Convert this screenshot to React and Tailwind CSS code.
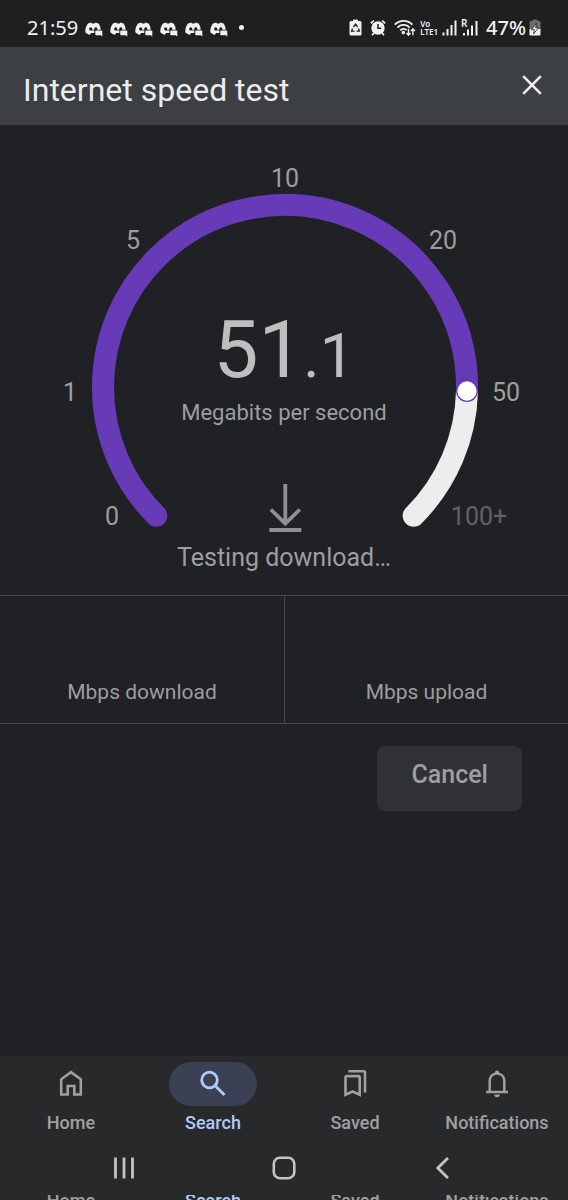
const TICKS = [
  { label: '0', x: 112, y: 400, tone: '#9d9e9f' },
  { label: '1', x: 70, y: 276, tone: '#9d9e9f' },
  { label: '5', x: 133, y: 124, tone: '#9d9e9f' },
  { label: '10', x: 285, y: 62, tone: '#9d9e9f' },
  { label: '20', x: 443, y: 124, tone: '#9d9e9f' },
  { label: '50', x: 506, y: 276, tone: '#9d9e9f' },
  { label: '100+', x: 479, y: 400, tone: '#606164' },
];

const NAV = [
  { label: 'Home', icon: HomeIcon },
  { label: 'Search', icon: SearchIcon, active: true },
  { label: 'Saved', icon: SavedIcon },
  { label: 'Notifications', icon: BellIcon },
];

function HomeIcon() {
  return (
    <svg width="32" height="32" viewBox="0 0 32 32" fill="none" stroke="currentColor" strokeWidth="2.6" aria-hidden="true">
      <path d="M6.2 26.500V11.300L16 4.200l9.800 7.100V26.500H19.300V18h-6.600v8.500Z" />
    </svg>
  );
}

function SearchIcon() {
  return (
    <svg width="32" height="32" viewBox="0 0 32 32" fill="none" stroke="currentColor" strokeWidth="2.8" aria-hidden="true">
      <circle cx="12.500" cy="12" r="7.800" />
      <path d="m18.200 17.700 9.300 9.300" />
    </svg>
  );
}

function SavedIcon() {
  return (
    <svg width="32" height="32" viewBox="0 0 32 32" fill="none" stroke="currentColor" strokeWidth="2.6" aria-hidden="true">
      <path d="M6.500 26.800V9.300q0-1.200 1.200-1.200h11.800q1.200 0 1.200 1.200v17.500l-7.100-3.300Z" />
      <path d="M9.300 3.300h15.300q1.400 0 1.400 1.400v19.800" />
    </svg>
  );
}

function BellIcon() {
  return (
    <svg width="32" height="32" viewBox="0 0 32 32" fill="none" stroke="currentColor" strokeWidth="2.500" aria-hidden="true">
      <path d="M5 24h22M8.700 24V13.500c0-4.800 3-8 7.300-8s7.300 3.200 7.300 8V24" />
      <path d="M13.900 5.500V4.600a2.100 2.100 0 0 1 4.200 0v.9ZM13.200 26.500h5.600a2.800 2.800 0 0 1-5.600 0Z" fill="currentColor" stroke="none" />
    </svg>
  );
}

function ChatIcon() {
  return (
    <svg width="18" height="15" viewBox="0 0 18 15" aria-hidden="true">
      <path
        fillRule="evenodd"
        fill="#f1f1f1"
        d="M3 1.500 6.200.4l.8 1h2.600l.8-1 3.200 1.100c1.300 1.900 2 3.900 2.100 6.300H6.900c.2-.3.300-.6.3-.9 0-.9-.6-1.700-1.500-1.700s-1.500.8-1.500 1.700.6 1.700 1.500 1.700h3.600v2.500H6l-1.200 1.900C2.800 12.200 1.400 11.500.3 10.300.1 7 1 4 3 1.500ZM10.800 5.200c-.8 0-1.400.7-1.500 1.600v1h3v-1c-.1-.9-.7-1.600-1.500-1.600Z"
      />
      <path fill="#f1f1f1" d="M11 8.500h5.600q.7 0 .7.700v5.300l-1.500-1.200H11q-.7 0-.7-.7V9.200q0-.7.700-.7Z" />
    </svg>
  );
}

function RecycleBatteryIcon() {
  return (
    <svg width="13" height="18" viewBox="0 0 13 18" aria-hidden="true">
      <path fill="#f1f1f1" d="M4 1.500Q4 .5 5 .5h3q1 0 1 1V2h2q1.500 0 1.500 1.500V15q0 1.500-1.500 1.500H2Q.5 16.500.5 15V3.500Q.5 2 2 2h2Z" />
      <path fill="none" stroke="#1f1f1f" strokeWidth="1.300" d="m4.400 8 2.100-2.800L8.600 8M9.500 9.400l.9 2.700H7.500M5.500 12.100H2.600l.9-2.700" />
    </svg>
  );
}

function AlarmIcon() {
  return (
    <svg width="16" height="18" viewBox="0 0 16 18" fill="none" aria-hidden="true">
      <circle cx="8" cy="9" r="6.700" fill="#f1f1f1" />
      <path d="M.8 4.400 3.900 1.500M15.200 4.400l-3.100-2.900M3.800 14l-1.700 2.300M12.200 14l1.700 2.300" stroke="#f1f1f1" strokeWidth="1.700" />
      <path d="M8 5v4.300h3.200" stroke="#1f1f1f" strokeWidth="1.500" />
    </svg>
  );
}

function WifiIcon() {
  return (
    <svg width="22" height="18" viewBox="0 0 22 18" fill="none" stroke="#f1f1f1" strokeWidth="1.800" aria-hidden="true">
      <path d="M.8 5.700c4.700-5.200 12.900-5.200 17.600 0M3.500 8.700c3.200-3.700 9-3.700 12.200 0M6.300 11.400c1.900-2 4.600-2 6.400-.2" />
      <circle cx="9.300" cy="13.600" r=".9" fill="#f1f1f1" />
      <path d="M14.500 9.800v6.200m-2-2 2 2.200 2-2.200M18.900 16.200V10m-2 2.100 2-2.200 2 2.200" strokeWidth="1.400" />
    </svg>
  );
}

function SignalIcon() {
  return (
    <svg width="15" height="18" viewBox="0 0 15 18" fill="#f1f1f1" aria-hidden="true">
      <path d="M.5 13.500h2v3h-2zM4.500 10h2v6.500h-2zM8.500 6h2v10.500h-2zM12.500 1.500h2v15h-2z" />
    </svg>
  );
}

function RoamingSignalIcon() {
  return (
    <svg width="17" height="24" viewBox="0 -2 17 24" aria-hidden="true">
      <text x="0" y="9" fontSize="10" fontWeight="600" fill="#f1f1f1" fontFamily="Noto Sans, sans-serif">R</text>
      <path fill="#f1f1f1" d="M2 15h2v2.500H2zM6 11.500h2v6H6zM10 7.500h2v10h-2zM14.500 3h2v14.500h-2z" />
    </svg>
  );
}

function ChargingIcon() {
  return (
    <svg width="12" height="18" viewBox="0 0 12 18" aria-hidden="true">
      <path fill="#6d6d6d" d="M3.500 1.500q0-1 1-1h3q1 0 1 1V2h1.700q1.300 0 1.300 1.300V10H.5V3.300Q.5 2 1.800 2h1.700Z" />
      <path fill="#f1f1f1" d="M.5 10h11v5.200q0 1.300-1.300 1.300H1.800Q.5 16.500.5 15.200Z" />
      <path fill="#f1f1f1" stroke="#1f1f1f" strokeWidth=".8" d="M7.500 4.200 2.400 10.700h3L4.500 15l5-6.300H6.700Z" />
    </svg>
  );
}

function StatusBar() {
  return (
    <div className="flex h-[47px] items-center justify-between bg-[#1f1f1f] pt-2 pr-[27px] pl-[27px] font-['Noto_Sans',sans-serif] text-xl text-[#f1f1f1]">
      <div className="flex items-center gap-[7px]">
        <span>21:59</span>
        <div className="flex items-center gap-[7px] pt-[3px]">
          {[0, 1, 2, 3, 4, 5].map((n) => (
            <ChatIcon key={n} />
          ))}
        </div>
        <span className="ml-1 size-[5px] rounded-full bg-[#f1f1f1]" />
      </div>
      <div className="flex items-center">
        <div className="flex items-center gap-2">
          <RecycleBatteryIcon />
          <AlarmIcon />
          <WifiIcon />
        </div>
        <div className="ml-1 flex flex-col text-[8px] leading-[8px] font-semibold">
          <span>Vo</span>
          <span>LTE1</span>
        </div>
        <div className="ml-1 flex items-center gap-1">
          <SignalIcon />
          <RoamingSignalIcon />
        </div>
        <span className="mr-[3px] ml-2 font-medium">47%</span>
        <ChargingIcon />
      </div>
    </div>
  );
}

function Gauge() {
  return (
    <section className="relative mx-auto w-full max-w-[568px]" aria-label="Download speed">
      <svg viewBox="0 0 568 410" className="block w-full" fill="none" aria-hidden="true">
        <path d="M467 266A182 182 0 0 1 413.700 390.700" stroke="#ededed" strokeWidth="22" strokeLinecap="round" />
        <path d="M156.300 390.700A182 182 0 0 1 156.300 133.300" stroke="#673ab7" strokeWidth="22" strokeLinecap="round" />
        <path d="M156.300 133.300A182 182 0 0 1 467 265" stroke="#673ab7" strokeWidth="22" />
        <circle cx="467" cy="266" r="10.300" fill="#fff" stroke="#673ab7" strokeWidth="1.300" />
        {TICKS.map((t) => (
          <text key={t.label} x={t.x} y={t.y} textAnchor="middle" fontSize="25" fill={t.tone} fontFamily="Roboto, sans-serif">
            {t.label}
          </text>
        ))}
      </svg>
      <div className="absolute inset-x-0 top-[182px] flex flex-col items-center">
        <p className="text-[80px] leading-[86px] text-[#bdbebe]">
          51<span className="text-[62px]">.1</span>
        </p>
        <p className="text-[22px] leading-7 text-[#9d9e9f]">Megabits per second</p>
      </div>
      <svg className="absolute top-[359px] left-1/2 -ml-4" width="34" height="50" viewBox="0 0 34 50" fill="none" stroke="#8d9094" strokeWidth="3.800" aria-hidden="true">
        <path d="M17.300 0v40M2.800 25.500l14.500 14 14.500-14M1.300 46h32" />
      </svg>
    </section>
  );
}

function NextRowPeek() {
  return (
    <div className="grid h-[5px] grid-cols-4 items-start overflow-hidden text-lg leading-3 font-medium" aria-hidden="true">
      {NAV.map((n) => (
        <span key={n.label} className={n.active ? 'text-center text-[#aecbfa]' : 'text-center text-[#a0a0a0]'}>
          {n.label}
        </span>
      ))}
    </div>
  );
}

export default function App() {
  return (
    <div className="flex min-h-screen flex-col bg-[#202124] font-[Roboto,sans-serif]">
      <StatusBar />
      <header className="flex h-[78px] items-start justify-between bg-[#3c4043] pr-[21px] pl-[23px] text-[#ececec]">
        <h1 className="pt-[25px] text-[32px] leading-9">Internet speed test</h1>
        <button type="button" aria-label="Close" className="mt-[23px] flex size-[30px] items-center justify-center">
          <svg width="20" height="20" viewBox="0 0 20 20" stroke="currentColor" strokeWidth="2.600" aria-hidden="true">
            <path d="m1.200 1.200 17.600 17.600M18.800 1.200 1.200 18.800" />
          </svg>
        </button>
      </header>
      <main className="flex grow flex-col text-[#9d9e9f]">
        <Gauge />
        <p className="pt-2 text-center text-[25px] leading-[30px]">Testing download…</p>
        <div className="mt-[22px] grid grid-cols-2 border-y border-[#47484b] text-center text-[21px] leading-8">
          <div className="pt-20 pb-[15px]">Mbps download</div>
          <div className="border-l border-[#47484b] pt-20 pb-[15px]">Mbps upload</div>
        </div>
        <div className="flex justify-end pt-[22px] pr-[46px]">
          <button type="button" className="h-[65px] rounded-lg bg-[#303134] px-[34px] pb-2 text-[25px] font-medium">
            Cancel
          </button>
        </div>
      </main>
      <footer className="bg-[#28292a] text-[#a0a0a0]">
        <nav className="grid grid-cols-4 pt-1.5">
          {NAV.map(({ label, icon: Icon, active }) => (
            <a
              key={label}
              href={'#' + label.toLowerCase()}
              className={active ? 'flex flex-col items-center text-[#aecbfa]' : 'flex flex-col items-center'}
            >
              <span className={active ? 'flex h-11 w-[88px] items-center justify-center rounded-full bg-[#3b4052]' : 'flex h-11 w-[88px] items-center justify-center'}>
                <Icon />
              </span>
              <span className="pt-[5px] text-lg leading-6 font-medium">{label}</span>
            </a>
          ))}
        </nav>
        <div className="flex h-[60px] items-center justify-between pt-1.5 pr-[113px] pl-[112px] text-[#c4c4c4]">
          <button type="button" aria-label="Recent apps">
            <svg width="24" height="24" viewBox="0 0 24 24" stroke="currentColor" strokeWidth="2.800" aria-hidden="true">
              <path d="M3.500 1.500v21M12 1.500v21M20.500 1.500v21" />
            </svg>
          </button>
          <button type="button" aria-label="Home screen">
            <svg width="24" height="24" viewBox="0 0 24 24" fill="none" stroke="currentColor" strokeWidth="2.600" aria-hidden="true">
              <rect x="1.800" y="1.800" width="20.500" height="20.400" rx="6" />
            </svg>
          </button>
          <button type="button" aria-label="Back">
            <svg width="24" height="24" viewBox="0 0 24 24" fill="none" stroke="currentColor" strokeWidth="2.800" aria-hidden="true">
              <path d="M17 2 6.800 12 17 22" />
            </svg>
          </button>
        </div>
        <NextRowPeek />
      </footer>
    </div>
  );
}
